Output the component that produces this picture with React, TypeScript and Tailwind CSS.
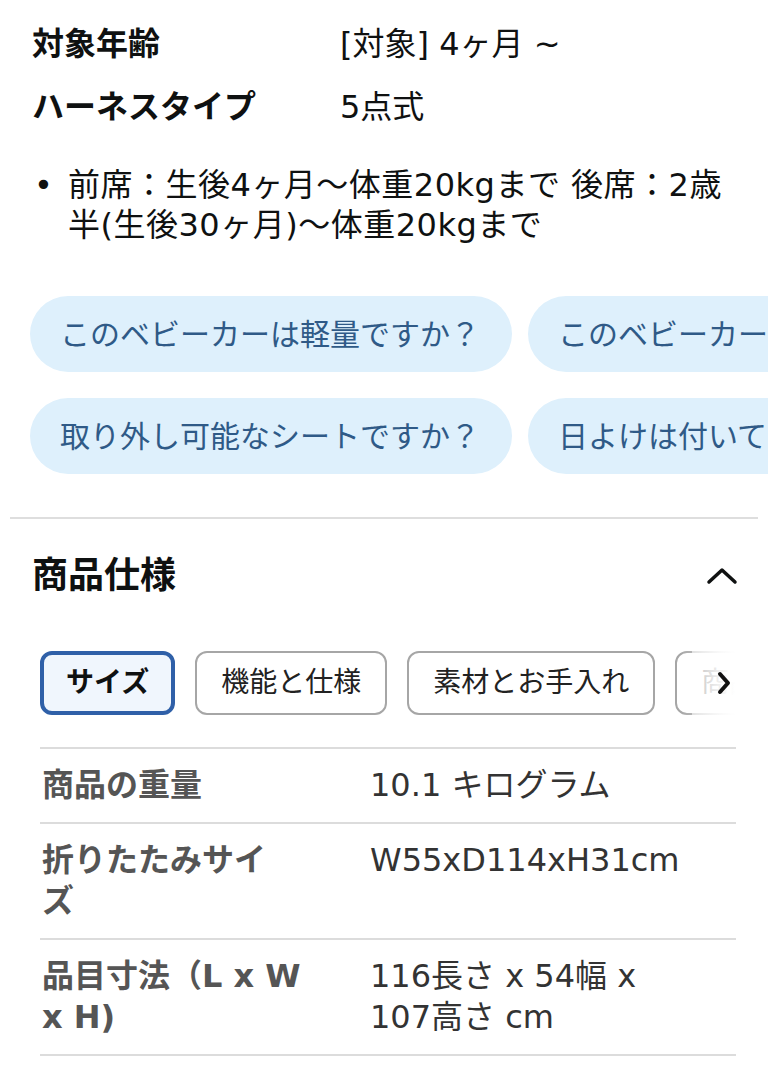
const font = "font-['DejaVu_Sans','Noto_Sans_CJK_JP',sans-serif]";

const pillRows = [
  ['このベビーカーは軽量ですか？', 'このベビーカーは折りたたみできますか？'],
  ['取り外し可能なシートですか？', '日よけは付いていますか？'],
];

const tabs = ['サイズ', '機能と仕様', '素材とお手入れ', '商品の寸法'];

const specs: { label: React.ReactNode; value: React.ReactNode }[] = [
  { label: '商品の重量', value: '10.1 キログラム' },
  { label: <>折りたたみサイ<br />ズ</>, value: 'W55xD114xH31cm' },
  { label: <>品目寸法（L x W<br />x H)</>, value: <>116長さ x 54幅 x<br />107高さ cm</> },
];

export default function App() {
  return (
    <div className={`w-[768px] min-h-[1080px] bg-white overflow-hidden text-[#0f1111] ${font}`}>
      <div className="px-[32px] pt-[24px]">
        <div className="flex text-[32px] leading-[40px]">
          <div className="w-[308px] font-bold">対象年齢</div>
          <div>[対象] 4ヶ月 ~</div>
        </div>
        <div className="flex text-[32px] leading-[40px] mt-[23px]">
          <div className="w-[308px] font-bold">ハーネスタイプ</div>
          <div>5点式</div>
        </div>
        <div className="flex mt-[38px] text-[32px] leading-[40px] tracking-[0.5px]">
          <span className="w-[36px] pl-[2px] shrink-0">•</span>
          <p>
            <span className="whitespace-nowrap">前席：生後4ヶ月〜体重20kgまで 後席：2歳</span>
            <br />
            <span className="whitespace-nowrap">半(生後30ヶ月)〜体重20kgまで</span>
          </p>
        </div>
      </div>

      <div className="mt-[51px] pl-[30px] flex flex-col gap-[26px]">
        {pillRows.map((row, i) => (
          <div key={i} className="flex gap-[16px] whitespace-nowrap">
            {row.map((p) => (
              <div
                key={p}
                className="h-[76px] w-[482px] shrink-0 rounded-full bg-[#def0fc] text-[#2f5a87] text-[30px] flex items-center px-[30px]"
              >
                {p}
              </div>
            ))}
          </div>
        ))}
      </div>

      <div className="mx-[10px] mt-[43px] h-[2px] bg-[#dedede]" />

      <div className="flex items-center justify-between pl-[32px] pr-[30px] mt-[33px]">
        <h2 className="text-[36px] leading-[48px] font-bold">商品仕様</h2>
        <svg width="32" height="20" viewBox="0 0 32 20" fill="none" stroke="#0f1111" strokeWidth="3.5" strokeLinecap="round" strokeLinejoin="round">
          <polyline points="3,16 16,4 29,16" />
        </svg>
      </div>

      <div className="relative ml-[40px] mr-[32px] mt-[51px] overflow-hidden">
        <div className="flex gap-[20px] whitespace-nowrap">
          {tabs.map((t, i) => (
            <div
              key={t}
              className={
                i === 0
                  ? 'h-[64px] shrink-0 rounded-[12px] border-[4px] border-[#2f60a8] bg-[#f0f6fd] px-[22px] flex items-center text-[28px] font-bold'
                  : 'h-[64px] shrink-0 rounded-[12px] border-[2px] border-[#a6a6a6] bg-white px-[24px] flex items-center text-[28px] text-[#222]'
              }
            >
              {t}
            </div>
          ))}
        </div>
        <div className="absolute top-0 bottom-0 left-[652px] right-0 bg-gradient-to-r from-white/60 to-white" />
        <div className="absolute top-0 bottom-0 left-[640px] w-[60px] bg-gradient-to-r from-white/0 to-white/80" />
        <svg className="absolute right-[4px] top-[20px]" width="16" height="24" viewBox="0 0 16 24" fill="none" stroke="#111" strokeWidth="4" strokeLinecap="round" strokeLinejoin="round">
          <polyline points="4,3 12,12 4,21" />
        </svg>
      </div>

      <div className="ml-[40px] mr-[32px] mt-[32px] border-t-[2px] border-[#dcdcdc]">
        {specs.map((s, i) => (
          <div key={i} className="flex border-b-[2px] border-[#dcdcdc] py-[16px] text-[32px] leading-[41px]">
            <div className="w-[330px] shrink-0 pl-[2px] font-bold text-[#555]">{s.label}</div>
            <div className="text-[#333]">{s.value}</div>
          </div>
        ))}
      </div>
    </div>
  );
}
